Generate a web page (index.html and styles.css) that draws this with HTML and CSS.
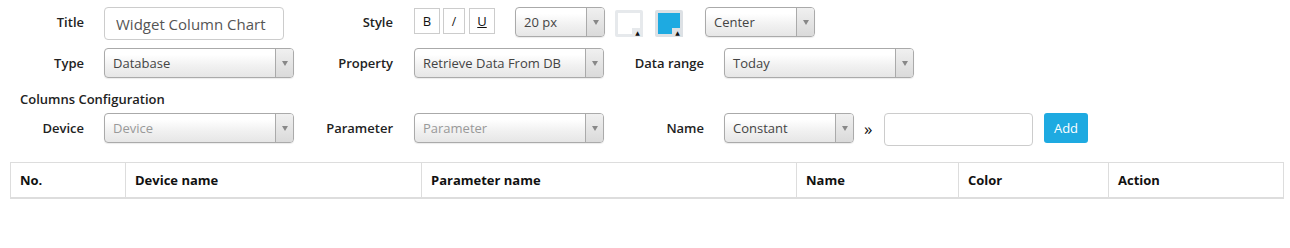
FILE: index.html
```html
<!DOCTYPE html>
<html lang="en">
<head>
    <meta charset="UTF-8">
    <meta name="viewport" content="width=device-width, initial-scale=1.0">
    <title>Widget Column Chart</title>
    <link rel="stylesheet" href="styles.css">
</head>
<body>
    <form class="widget-form">
        <div class="form-row row-title">
            <label class="field-label">Title</label>
            <div class="field-cell">
                <input type="text" class="text-input title-input" value="Widget Column Chart">
            </div>
            <label class="field-label">Style</label>
            <div class="style-tools">
                <button type="button" class="style-btn">B</button>
                <button type="button" class="style-btn italic">/</button>
                <button type="button" class="style-btn underline">U</button>
                <div class="chosen size-select"><span class="chosen-text">20 px</span><span class="chosen-arrow"><i></i></span></div>
                <div class="swatch light"><span class="swatch-fill white"></span><span class="swatch-corner">&#9650;</span></div>
                <div class="swatch"><span class="swatch-fill blue"></span><span class="swatch-corner">&#9650;</span></div>
                <div class="chosen align-select"><span class="chosen-text">Center</span><span class="chosen-arrow"><i></i></span></div>
            </div>
        </div>

        <div class="form-row">
            <label class="field-label">Type</label>
            <div class="field-cell">
                <div class="chosen"><span class="chosen-text">Database</span><span class="chosen-arrow"><i></i></span></div>
            </div>
            <label class="field-label">Property</label>
            <div class="field-cell">
                <div class="chosen"><span class="chosen-text">Retrieve Data From DB</span><span class="chosen-arrow"><i></i></span></div>
            </div>
            <label class="field-label">Data range</label>
            <div class="field-cell">
                <div class="chosen"><span class="chosen-text">Today</span><span class="chosen-arrow"><i></i></span></div>
            </div>
        </div>

        <h4 class="section-title">Columns Configuration</h4>

        <div class="form-row row-columns">
            <label class="field-label">Device</label>
            <div class="field-cell">
                <div class="chosen"><span class="chosen-text placeholder">Device</span><span class="chosen-arrow"><i></i></span></div>
            </div>
            <label class="field-label">Parameter</label>
            <div class="field-cell">
                <div class="chosen"><span class="chosen-text placeholder">Parameter</span><span class="chosen-arrow"><i></i></span></div>
            </div>
            <label class="field-label">Name</label>
            <div class="name-tools">
                <div class="chosen name-select"><span class="chosen-text">Constant</span><span class="chosen-arrow"><i></i></span></div>
                <span class="raquo">&raquo;</span>
                <input type="text" class="text-input name-input">
                <button type="button" class="btn-add">Add</button>
            </div>
        </div>
    </form>

    <table class="columns-table">
        <colgroup>
            <col class="col-no">
            <col class="col-device">
            <col class="col-param">
            <col class="col-name">
            <col class="col-color">
            <col class="col-action">
        </colgroup>
        <thead>
            <tr>
                <th>No.</th>
                <th>Device name</th>
                <th>Parameter name</th>
                <th>Name</th>
                <th>Color</th>
                <th>Action</th>
            </tr>
        </thead>
    </table>
</body>
</html>
```
FILE: styles.css
```css
body {
    margin: 0;
    font-family: "Open Sans", "DejaVu Sans", sans-serif;
    font-size: 13px;
    color: #222;
    background-color: #fff;
}
.widget-form {
    padding-top: 7px;
}
.form-row {
    display: flex;
    align-items: flex-start;
    height: 30px;
    margin-bottom: 8px;
}
.row-title {
    height: 33px;
}
.row-columns {
    height: 33px;
    margin-bottom: 16px;
}
.field-label {
    width: 84px;
    margin-right: 20px;
    text-align: right;
    font-weight: 600;
    line-height: 30px;
    white-space: nowrap;
}
.field-label:nth-of-type(2) {
    width: 99px;
    margin-right: 21px;
}
.field-label:nth-of-type(3) {
    width: 100px;
}
.field-cell {
    width: 190px;
}
.text-input {
    box-sizing: border-box;
    height: 33px;
    border: 1px solid #ccc;
    border-radius: 4px;
    padding: 0 11px;
    font-family: inherit;
    color: #555;
    outline: none;
}
.title-input {
    width: 180px;
    font-size: 15px;
}
.name-input {
    width: 149px;
}

/* chosen-like dropdown */
.chosen {
    box-sizing: border-box;
    display: flex;
    height: 30px;
    border: 1px solid #aaa;
    border-radius: 4px;
    background: linear-gradient(#fff 20%, #f1f1f1 60%, #e6e6e6);
    box-shadow: 0 1px 1px rgba(0, 0, 0, 0.08);
    overflow: hidden;
}
.chosen-text {
    flex: 1;
    padding-left: 8px;
    line-height: 29px;
    color: #444;
    white-space: nowrap;
}
.chosen-text.placeholder {
    color: #999;
}
.chosen-arrow {
    width: 17px;
    border-left: 1px solid #aaa;
    background: linear-gradient(#f0f0f0, #dadada);
    display: flex;
    align-items: center;
    justify-content: center;
}
.chosen-arrow i {
    width: 0;
    height: 0;
    border-left: 3px solid transparent;
    border-right: 3px solid transparent;
    border-top: 5px solid #888;
}

/* style tools */
.style-tools {
    display: flex;
    align-items: flex-start;
}
.style-btn {
    box-sizing: border-box;
    width: 26px;
    height: 26px;
    margin: 1px 3px 0 0;
    padding: 0;
    border: 1px solid #ccc;
    background: #fff;
    font-family: inherit;
    font-size: 13px;
    color: #111;
}
.style-btn.italic {
    width: 22px;
    margin-right: 4px;
    font-size: 12px;
}
.style-btn.underline {
    text-decoration: underline;
}
.size-select {
    width: 90px;
    margin-left: 17px;
    margin-right: 10px;
}
.align-select {
    width: 110px;
}
.swatch {
    box-sizing: border-box;
    position: relative;
    width: 28px;
    height: 27px;
    margin: 3px 22px 0 0;
    padding: 3px;
    background: #dde1e5;
    border-radius: 2px;
}
.swatch.light {
    margin-right: 12px;
    background: #e6e9ec;
}
.swatch-fill {
    display: block;
    width: 100%;
    height: 100%;
}
.swatch-fill.white {
    background: #fff;
}
.swatch-fill.blue {
    background: #1eaae1;
}
.swatch-corner {
    position: absolute;
    right: 0;
    bottom: 0;
    width: 11px;
    height: 9px;
    background: inherit;
    font-size: 6px;
    line-height: 10px;
    text-align: center;
    color: #111;
}

.section-title {
    margin: 12px 0 5px 20px;
    font-size: 13px;
    font-weight: 600;
    line-height: 18px;
}

/* name controls */
.name-tools {
    display: flex;
    align-items: flex-start;
}
.name-select {
    width: 130px;
}
.raquo {
    width: 12px;
    margin: 0 8px 0 10px;
    font-size: 17px;
    line-height: 31px;
    color: #111;
}
.btn-add {
    height: 30px;
    width: 44px;
    margin-left: 11px;
    border: none;
    border-radius: 3px;
    background-color: #1eaae1;
    color: #fff;
    font-family: inherit;
    font-size: 13px;
}

/* table */
.columns-table {
    width: 1273px;
    margin-left: 10px;
    border-collapse: collapse;
    table-layout: fixed;
}
.columns-table th {
    height: 34px;
    padding: 0 9px;
    border: 1px solid #ddd;
    border-bottom: 2px solid #ddd;
    text-align: left;
    font-weight: 700;
    color: #111;
}
.col-no { width: 115px; }
.col-device { width: 296px; }
.col-param { width: 375px; }
.col-name { width: 162px; }
.col-color { width: 150px; }
.col-action { width: 175px; }
```
